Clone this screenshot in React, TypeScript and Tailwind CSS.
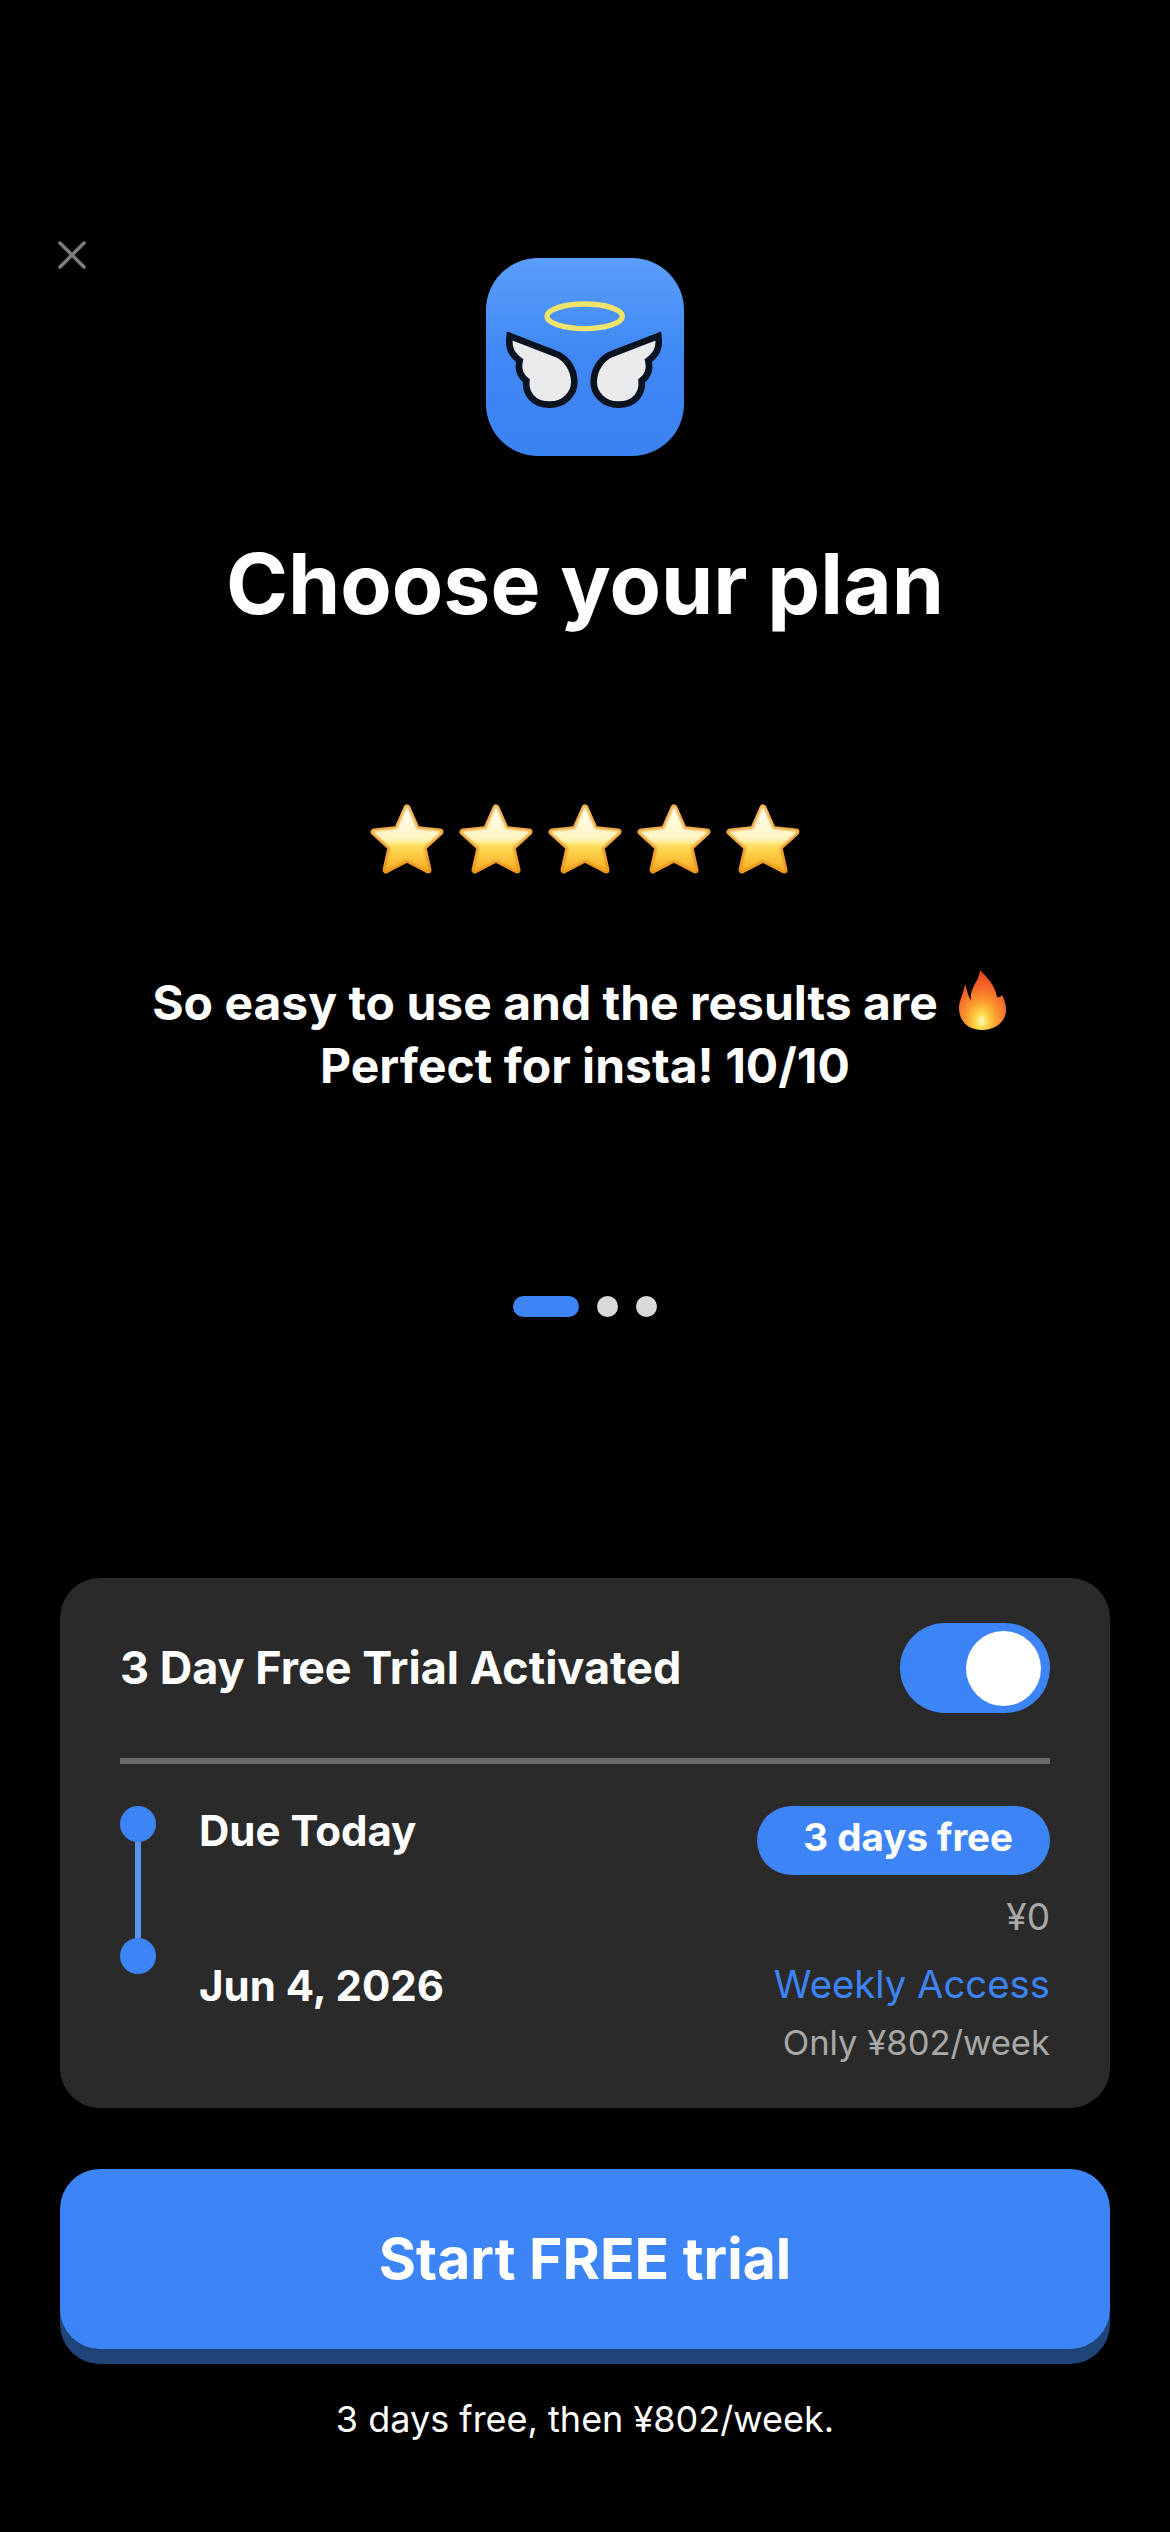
import { useId } from "react";

function CloseIcon() {
  return (
    <svg width="28" height="28" viewBox="0 0 28 28" fill="none" stroke="#7d7d7d" strokeWidth="3.5" strokeLinecap="round">
      <path d="M2 2 L26 26 M26 2 L2 26" />
    </svg>
  );
}

const wing =
  "M92 246 C88 275 92 298 122 320 C116 345 122 365 142 380 C138 415 160 452 212 452 C256 452 286 420 286 385 C286 345 262 312 232 300 Z";

function AppIcon() {
  return (
    <div className="w-[198px] h-[198px] rounded-[52px] bg-linear-to-b from-[#5a9dfa] via-[#3f88f5] to-[#3a82f0] overflow-hidden">
      <svg width="198" height="198" viewBox="21 12 594 594">
        <ellipse cx="317" cy="187" rx="113" ry="37" fill="none" stroke="#efe36c" strokeWidth="16" />
        <path d={wing} fill="#e9eaec" stroke="#0b1220" strokeWidth="20" strokeLinejoin="miter" strokeMiterlimit="6" />
        <path d={wing} fill="#e9eaec" stroke="#0b1220" strokeWidth="20" strokeLinejoin="miter" strokeMiterlimit="6" transform="translate(630 0) scale(-1 1)" />
      </svg>
    </div>
  );
}

function Star() {
  const id = useId();
  const points = "37,4 46.5,25.5 70,28 53,43.5 58,66 37,55 16,66 21,43.5 4,28 27.5,25.5";
  return (
    <svg width="74" height="70" viewBox="0 0 74 70">
      <defs>
        <linearGradient id={id + "a"} x1="0" y1="0" x2="0" y2="1">
          <stop offset="0" stopColor="#fffff4" />
          <stop offset="0.5" stopColor="#fff6c0" />
          <stop offset="0.62" stopColor="#fedc58" />
          <stop offset="1" stopColor="#f8ad22" />
        </linearGradient>
        <linearGradient id={id + "b"} x1="0" y1="0" x2="0" y2="1">
          <stop offset="0" stopColor="#efb04a" />
          <stop offset="1" stopColor="#e8941d" />
        </linearGradient>
        <filter id={id + "c"} x="-20%" y="-20%" width="140%" height="140%">
          <feGaussianBlur stdDeviation="1.3" />
        </filter>
      </defs>
      <polygon points={points} fill={`url(#${id}b)`} stroke={`url(#${id}b)`} strokeWidth="7" strokeLinejoin="round" />
      <polygon points={points} fill={`url(#${id}a)`} stroke={`url(#${id}a)`} strokeWidth="1.5" strokeLinejoin="round" filter={`url(#${id}c)`} />
    </svg>
  );
}

function Flame() {
  const id = useId();
  return (
    <svg width="47" height="60" viewBox="0 0 47 60" className="inline-block align-[-10px] ml-[21px] mr-[12px]">
      <defs>
        <radialGradient id={id} cx="0.48" cy="0.85" r="0.8">
          <stop offset="0" stopColor="#fff9c8" />
          <stop offset="0.16" stopColor="#ffd84a" />
          <stop offset="0.42" stopColor="#fb9a2c" />
          <stop offset="0.75" stopColor="#f2622a" />
          <stop offset="1" stopColor="#e9481f" />
        </radialGradient>
      </defs>
      <path
        d="M21 0 C27 7 36 14 38 27 C41 28 42 26 43 25 C46 30 47 36 47 40 C47 52 36 60 23 60 C10 60 0 52 0 38 C0 30 4 26 6 14 C8 20 9 26 12 31 C10 18 20 12 21 0 Z"
        fill={`url(#${id})`}
      />
    </svg>
  );
}

export default function App() {
  return (
    <div className="w-[1170px] h-[2532px] bg-black text-white flex flex-col font-['Inter',sans-serif]">
      {/* Header */}
      <div className="pt-[241px] px-[58px] grid grid-cols-[1fr_auto_1fr]">
        <div>
          <CloseIcon />
        </div>
        <div className="mt-[17px]">
          <AppIcon />
        </div>
        <div />
      </div>

      <h1 className="mt-[78px] text-center text-[84px] leading-[100px] font-bold">Choose your plan</h1>

      {/* Testimonial */}
      <div className="mt-[170px] flex justify-center gap-[15px]">
        <Star />
        <Star />
        <Star />
        <Star />
        <Star />
      </div>

      <p className="mt-[96px] text-center text-[48px] leading-[63px] font-bold">
        So easy to use and the results are
        <Flame />
        <br />
        Perfect for insta! 10/10
      </p>

      <div className="mt-[199px] flex justify-center items-center gap-[18px]">
        <div className="w-[66px] h-[21px] rounded-full bg-[#3d85f6]" />
        <div className="w-[21px] h-[21px] rounded-full bg-[#d9d9d9]" />
        <div className="w-[21px] h-[21px] rounded-full bg-[#d9d9d9]" />
      </div>

      {/* Trial card */}
      <div className="mt-[261px] mx-[60px] h-[530px] rounded-[40px] bg-[#2a2a2a] px-[60px] pt-[45px]">
        <div className="flex items-center justify-between">
          <span className="text-[45px] leading-[52px] font-bold">3 Day Free Trial Activated</span>
          <div className="w-[150px] h-[90px] rounded-full bg-[#3d85f6] flex items-center justify-end pr-[9px]">
            <div className="w-[75px] h-[75px] rounded-full bg-white" />
          </div>
        </div>

        <div className="mt-[45px] h-[6px] bg-[#6b6b6b]" />

        <div className="mt-[42px] flex justify-between">
          <div className="flex gap-[43px]">
            <div className="w-[36px] flex flex-col items-center">
              <div className="w-[36px] h-[36px] rounded-full bg-[#3d85f6]" />
              <div className="w-[6px] h-[96px] bg-[#5b93ef]" />
              <div className="w-[36px] h-[36px] rounded-full bg-[#3d85f6]" />
            </div>
            <div className="flex flex-col font-bold text-[42px] leading-[50px]">
              <span>Due Today</span>
              <span className="mt-[105px]">Jun 4, 2026</span>
            </div>
          </div>

          <div className="flex flex-col items-end">
            <div className="h-[69px] rounded-full bg-[#3d85f6] pl-[46px] pr-[37px] pb-[5px] flex items-center text-[38.5px] font-bold">3 days free</div>
            <span className="mt-[21px] text-[37px] leading-[42px] text-[#a8a8a8]">¥0</span>
            <span className="mt-[22px] text-[38.3px] leading-[48px] text-[#3d85f6]">Weekly Access</span>
            <span className="mt-[13px] text-[34.6px] leading-[42px] text-[#a8a8a8]">Only ¥802/week</span>
          </div>
        </div>
      </div>

      {/* CTA */}
      <button className="mt-[61px] mx-[60px] h-[180px] rounded-[40px] bg-[#3d85f6] shadow-[0_15px_0_#1f4478] text-[57px] font-bold">
        Start FREE trial
      </button>

      <p className="mt-[48px] text-center text-[36px] leading-[44px]">3 days free, then ¥802/week.</p>
    </div>
  );
}
